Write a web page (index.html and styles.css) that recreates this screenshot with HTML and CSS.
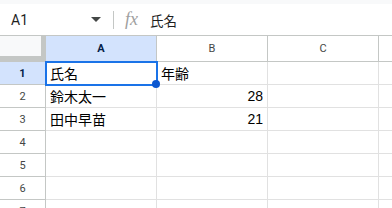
FILE: index.html
```html
<!DOCTYPE html>
<html>
<head>
<meta charset="utf-8">
<link rel="stylesheet" href="styles.css">
</head>
<body>
<div class="top-strip"></div>
<div class="fbar">
  <div class="namebox">A1</div>
  <svg class="caret" width="10" height="6" viewBox="0 0 10 6"><path d="M0 0h10L5 5z" fill="#444746"/></svg>
  <div class="divider"></div>
  <span class="fx">fx</span>
  <div class="fvalue">氏名</div>
</div>
<div class="grid">
  <div class="corner"></div>
  <div class="ch sel">A</div>
  <div class="ch">B</div>
  <div class="ch">C</div>
  <div class="ch"></div>

  <div class="rh sel">1</div>
  <div class="cell active">氏名<span class="handle"></span></div>
  <div class="cell">年齢</div>
  <div class="cell"></div>
  <div class="cell"></div>

  <div class="rh">2</div>
  <div class="cell">鈴木太一</div>
  <div class="cell num">28</div>
  <div class="cell"></div>
  <div class="cell"></div>

  <div class="rh">3</div>
  <div class="cell">田中早苗</div>
  <div class="cell num">21</div>
  <div class="cell"></div>
  <div class="cell"></div>

  <div class="rh">4</div>
  <div class="cell"></div>
  <div class="cell"></div>
  <div class="cell"></div>
  <div class="cell"></div>

  <div class="rh">5</div>
  <div class="cell"></div>
  <div class="cell"></div>
  <div class="cell"></div>
  <div class="cell"></div>

  <div class="rh">6</div>
  <div class="cell"></div>
  <div class="cell"></div>
  <div class="cell"></div>
  <div class="cell"></div>

  <div class="rh">7</div>
  <div class="cell"></div>
  <div class="cell"></div>
  <div class="cell"></div>
  <div class="cell"></div>
</div>
</body>
</html>
```
FILE: styles.css
```css
* { box-sizing: border-box; }
html, body {
  margin: 0;
  padding: 0;
  width: 392px;
  height: 208px;
  overflow: hidden;
  background: #fff;
  font-family: "Liberation Sans", Roboto, "Noto Sans CJK JP", sans-serif;
}
.top-strip {
  height: 4px;
  background: #f8f9fa;
}
.fbar {
  height: 32px;
  display: flex;
  align-items: center;
  border-bottom: 1px solid #c4c7c5;
  color: #1f1f1f;
}
.namebox {
  font-size: 14px;
  width: 90px;
  padding-left: 11px;
  font-family: Roboto, "Liberation Sans", sans-serif;
}
.caret {
  margin-left: 1px;
  margin-top: 1px;
}
.divider {
  width: 1px;
  height: 18px;
  background: #c4c7c5;
  margin-left: 12px;
}
.fx {
  font-family: "Liberation Serif", serif;
  font-style: italic;
  font-size: 18px;
  color: #a0a0a0;
  margin-left: 11px;
  letter-spacing: 0px;
}
.fvalue {
  margin-left: 12px;
  font-size: 13.5px;
  font-family: "Noto Sans CJK JP", sans-serif;
}
.grid {
  display: grid;
  grid-template-columns: 46px 111px 111px 111px 111px;
  grid-template-rows: 26px repeat(7, 23px);
}
.corner {
  background: #f8f9fa;
  border-right: 5px solid #c4c7c5;
  border-bottom: 6px solid #c4c7c5;
}
.ch {
  border-right: 1px solid #c4c7c5;
  border-bottom: 1px solid #c4c7c5;
  display: flex;
  align-items: center;
  justify-content: center;
  font-size: 11px;
  color: #444746;
  font-family: Roboto, "Liberation Sans", sans-serif;
}
.ch.sel, .rh.sel {
  background: #d3e3fd;
  color: #041e49;
  font-weight: bold;
}
.rh {
  border-right: 1px solid #c4c7c5;
  border-bottom: 1px solid #c4c7c5;
  display: flex;
  align-items: center;
  justify-content: center;
  font-size: 11px;
  color: #444746;
  font-family: Roboto, "Liberation Sans", sans-serif;
}
.cell {
  border-right: 1px solid #e1e1e1;
  border-bottom: 1px solid #e1e1e1;
  display: flex;
  align-items: center;
  padding: 0 4px;
  font-size: 14px;
  color: #000;
  font-family: "Liberation Sans", "Noto Sans CJK JP", sans-serif;
  position: relative;
}
.cell.num {
  justify-content: flex-end;
}
.cell.active {
  outline: 2px solid #1a73e8;
  outline-offset: -1px;
  z-index: 1;
}
.handle {
  position: absolute;
  right: -4px;
  bottom: -4px;
  width: 8px;
  height: 8px;
  border-radius: 50%;
  background: #0b57d0;
}
```
